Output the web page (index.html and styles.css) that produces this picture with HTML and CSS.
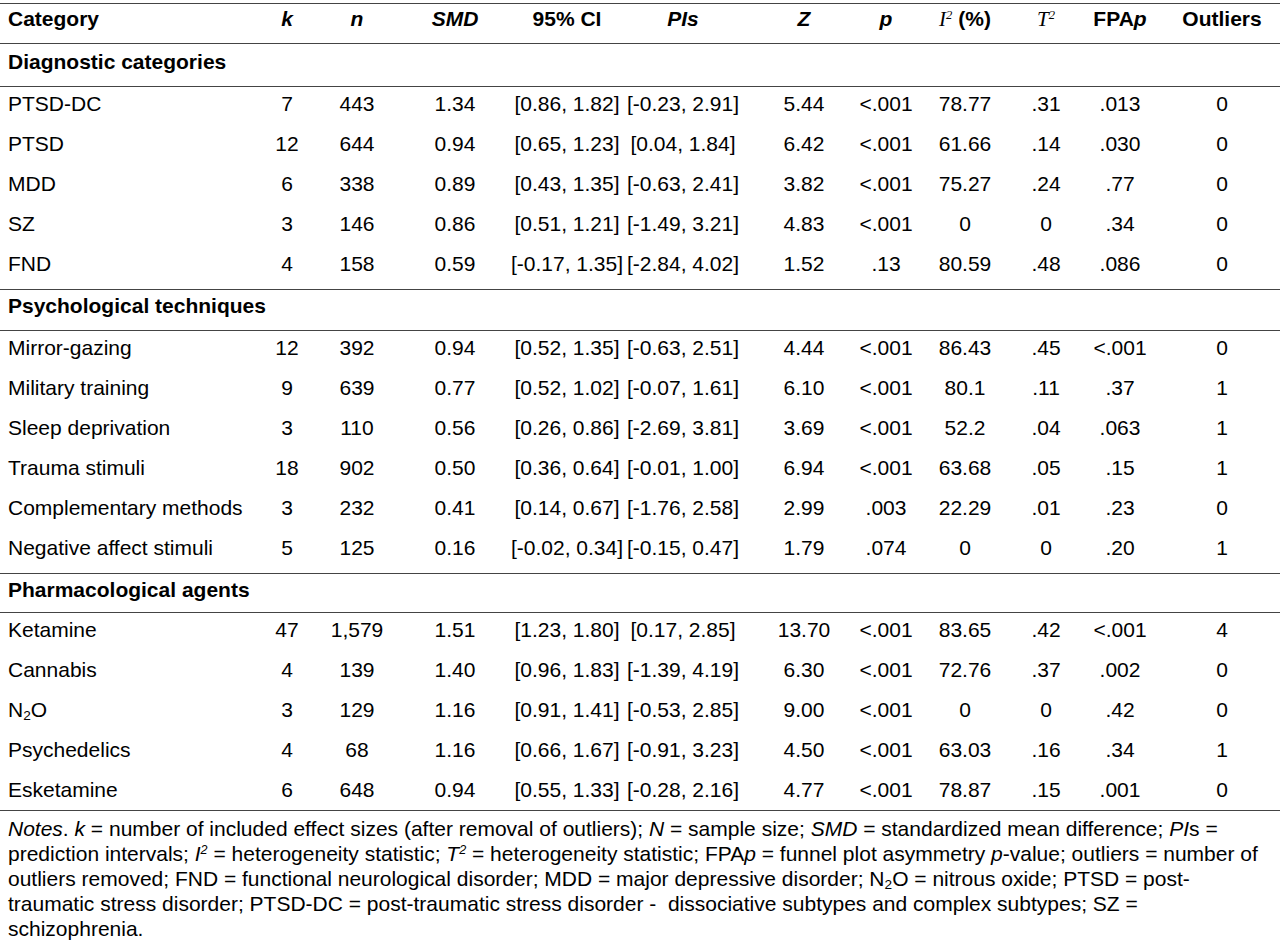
FILE: index.html
```html
<!DOCTYPE html>
<html lang="en">
    <head>
        <meta charset="UTF-8" />
        <meta name="viewport" content="width=device-width, initial-scale=1.0" />
        <title>Effect sizes by category</title>
        <link rel="stylesheet" href="styles.css">
    </head>
    <body>
        <div class="table">
            <div class="row head">
                <div class="cell cat">Category</div>
                <div class="cell"><i>k</i></div>
                <div class="cell"><i>n</i></div>
                <div class="cell"><i>SMD</i></div>
                <div class="cell">95% CI</div>
                <div class="cell"><i>PIs</i></div>
                <div class="cell"><i>Z</i></div>
                <div class="cell"><i>p</i></div>
                <div class="cell"><span><span class="serif">I<sup>2</sup></span>&nbsp;(%)</span></div>
                <div class="cell"><span class="serif">T<sup>2</sup></span></div>
                <div class="cell"><span>FPA<i>p</i></span></div>
                <div class="cell">Outliers</div>
            </div>

            <div class="row section first"><div class="cell cat">Diagnostic categories</div></div>
            <div class="row">
                <div class="cell cat">PTSD-DC</div>
                <div class="cell">7</div><div class="cell">443</div><div class="cell">1.34</div>
                <div class="cell">[0.86, 1.82]</div><div class="cell">[-0.23, 2.91]</div>
                <div class="cell">5.44</div><div class="cell">&lt;.001</div><div class="cell">78.77</div>
                <div class="cell">.31</div><div class="cell">.013</div><div class="cell">0</div>
            </div>
            <div class="row">
                <div class="cell cat">PTSD</div>
                <div class="cell">12</div><div class="cell">644</div><div class="cell">0.94</div>
                <div class="cell">[0.65, 1.23]</div><div class="cell">[0.04, 1.84]</div>
                <div class="cell">6.42</div><div class="cell">&lt;.001</div><div class="cell">61.66</div>
                <div class="cell">.14</div><div class="cell">.030</div><div class="cell">0</div>
            </div>
            <div class="row">
                <div class="cell cat">MDD</div>
                <div class="cell">6</div><div class="cell">338</div><div class="cell">0.89</div>
                <div class="cell">[0.43, 1.35]</div><div class="cell">[-0.63, 2.41]</div>
                <div class="cell">3.82</div><div class="cell">&lt;.001</div><div class="cell">75.27</div>
                <div class="cell">.24</div><div class="cell">.77</div><div class="cell">0</div>
            </div>
            <div class="row">
                <div class="cell cat">SZ</div>
                <div class="cell">3</div><div class="cell">146</div><div class="cell">0.86</div>
                <div class="cell">[0.51, 1.21]</div><div class="cell">[-1.49, 3.21]</div>
                <div class="cell">4.83</div><div class="cell">&lt;.001</div><div class="cell">0</div>
                <div class="cell">0</div><div class="cell">.34</div><div class="cell">0</div>
            </div>
            <div class="row last">
                <div class="cell cat">FND</div>
                <div class="cell">4</div><div class="cell">158</div><div class="cell">0.59</div>
                <div class="cell">[-0.17, 1.35]</div><div class="cell">[-2.84, 4.02]</div>
                <div class="cell">1.52</div><div class="cell">.13</div><div class="cell">80.59</div>
                <div class="cell">.48</div><div class="cell">.086</div><div class="cell">0</div>
            </div>

            <div class="row section"><div class="cell cat">Psychological techniques</div></div>
            <div class="row">
                <div class="cell cat">Mirror-gazing</div>
                <div class="cell">12</div><div class="cell">392</div><div class="cell">0.94</div>
                <div class="cell">[0.52, 1.35]</div><div class="cell">[-0.63, 2.51]</div>
                <div class="cell">4.44</div><div class="cell">&lt;.001</div><div class="cell">86.43</div>
                <div class="cell">.45</div><div class="cell">&lt;.001</div><div class="cell">0</div>
            </div>
            <div class="row">
                <div class="cell cat">Military training</div>
                <div class="cell">9</div><div class="cell">639</div><div class="cell">0.77</div>
                <div class="cell">[0.52, 1.02]</div><div class="cell">[-0.07, 1.61]</div>
                <div class="cell">6.10</div><div class="cell">&lt;.001</div><div class="cell">80.1</div>
                <div class="cell">.11</div><div class="cell">.37</div><div class="cell">1</div>
            </div>
            <div class="row">
                <div class="cell cat">Sleep deprivation</div>
                <div class="cell">3</div><div class="cell">110</div><div class="cell">0.56</div>
                <div class="cell">[0.26, 0.86]</div><div class="cell">[-2.69, 3.81]</div>
                <div class="cell">3.69</div><div class="cell">&lt;.001</div><div class="cell">52.2</div>
                <div class="cell">.04</div><div class="cell">.063</div><div class="cell">1</div>
            </div>
            <div class="row">
                <div class="cell cat">Trauma stimuli</div>
                <div class="cell">18</div><div class="cell">902</div><div class="cell">0.50</div>
                <div class="cell">[0.36, 0.64]</div><div class="cell">[-0.01, 1.00]</div>
                <div class="cell">6.94</div><div class="cell">&lt;.001</div><div class="cell">63.68</div>
                <div class="cell">.05</div><div class="cell">.15</div><div class="cell">1</div>
            </div>
            <div class="row">
                <div class="cell cat">Complementary methods</div>
                <div class="cell">3</div><div class="cell">232</div><div class="cell">0.41</div>
                <div class="cell">[0.14, 0.67]</div><div class="cell">[-1.76, 2.58]</div>
                <div class="cell">2.99</div><div class="cell">.003</div><div class="cell">22.29</div>
                <div class="cell">.01</div><div class="cell">.23</div><div class="cell">0</div>
            </div>
            <div class="row last">
                <div class="cell cat">Negative affect stimuli</div>
                <div class="cell">5</div><div class="cell">125</div><div class="cell">0.16</div>
                <div class="cell">[-0.02, 0.34]</div><div class="cell">[-0.15, 0.47]</div>
                <div class="cell">1.79</div><div class="cell">.074</div><div class="cell">0</div>
                <div class="cell">0</div><div class="cell">.20</div><div class="cell">1</div>
            </div>

            <div class="row section short"><div class="cell cat">Pharmacological agents</div></div>
            <div class="row">
                <div class="cell cat">Ketamine</div>
                <div class="cell">47</div><div class="cell">1,579</div><div class="cell">1.51</div>
                <div class="cell">[1.23, 1.80]</div><div class="cell">[0.17, 2.85]</div>
                <div class="cell">13.70</div><div class="cell">&lt;.001</div><div class="cell">83.65</div>
                <div class="cell">.42</div><div class="cell">&lt;.001</div><div class="cell">4</div>
            </div>
            <div class="row">
                <div class="cell cat">Cannabis</div>
                <div class="cell">4</div><div class="cell">139</div><div class="cell">1.40</div>
                <div class="cell">[0.96, 1.83]</div><div class="cell">[-1.39, 4.19]</div>
                <div class="cell">6.30</div><div class="cell">&lt;.001</div><div class="cell">72.76</div>
                <div class="cell">.37</div><div class="cell">.002</div><div class="cell">0</div>
            </div>
            <div class="row">
                <div class="cell cat">N<sub>2</sub>O</div>
                <div class="cell">3</div><div class="cell">129</div><div class="cell">1.16</div>
                <div class="cell">[0.91, 1.41]</div><div class="cell">[-0.53, 2.85]</div>
                <div class="cell">9.00</div><div class="cell">&lt;.001</div><div class="cell">0</div>
                <div class="cell">0</div><div class="cell">.42</div><div class="cell">0</div>
            </div>
            <div class="row">
                <div class="cell cat">Psychedelics</div>
                <div class="cell">4</div><div class="cell">68</div><div class="cell">1.16</div>
                <div class="cell">[0.66, 1.67]</div><div class="cell">[-0.91, 3.23]</div>
                <div class="cell">4.50</div><div class="cell">&lt;.001</div><div class="cell">63.03</div>
                <div class="cell">.16</div><div class="cell">.34</div><div class="cell">1</div>
            </div>
            <div class="row last end">
                <div class="cell cat">Esketamine</div>
                <div class="cell">6</div><div class="cell">648</div><div class="cell">0.94</div>
                <div class="cell">[0.55, 1.33]</div><div class="cell">[-0.28, 2.16]</div>
                <div class="cell">4.77</div><div class="cell">&lt;.001</div><div class="cell">78.87</div>
                <div class="cell">.15</div><div class="cell">.001</div><div class="cell">0</div>
            </div>
        </div>

        <p class="notes">
            <i>Notes</i>. <i>k</i> = number of included effect sizes (after removal of outliers); <i>N</i> = sample size; <i>SMD</i> = standardized mean difference; <i>PI</i>s = prediction intervals; <i>I<sup>2</sup></i> = heterogeneity statistic; <i>T<sup>2</sup></i> = heterogeneity statistic; FPA<i>p</i> = funnel plot asymmetry <i>p</i>-value; outliers = number of outliers removed; FND = functional neurological disorder; MDD = major depressive disorder; N<sub>2</sub>O = nitrous oxide; PTSD = post-traumatic stress disorder; PTSD-DC = post-traumatic stress disorder -&nbsp; dissociative subtypes and complex subtypes; SZ = schizophrenia.
        </p>
    </body>
</html>
```

FILE: styles.css
```css
body {
    margin: 0;
    background-color: #fff;
    color: #000;
    font-family: "Liberation Sans", Arial, sans-serif;
    font-size: 21px;
}
.table {
    margin-top: 3px;
    border-top: 1px solid #444;
}
.row {
    display: grid;
    grid-template-columns: 252px 70px 70px 126px 98px 134px 108px 56px 102px 60px 88px 116px;
    box-sizing: border-box;
    height: 40px;
    padding-top: 5px;
    line-height: 24px;
}
.row.head {
    height: 40px;
    padding-top: 3px;
    font-weight: bold;
    border-bottom: 1px solid #444;
}
.row.section {
    height: 41px;
    padding-top: 4px;
    font-weight: bold;
    border-bottom: 1px solid #444;
}
.row.section.first {
    height: 43px;
    padding-top: 6px;
}
.row.section.short {
    height: 39px;
}
.row.last {
    height: 43px;
    border-bottom: 1px solid #444;
}
.row.last.end {
    height: 38px;
}
.cell {
    display: flex;
    justify-content: center;
    white-space: nowrap;
}
.cell.cat {
    display: block;
    padding-left: 8px;
}
.serif {
    font-family: "Liberation Serif", "Times New Roman", serif;
    font-style: italic;
    font-weight: normal;
}
sup {
    font-size: 0.6em;
    line-height: 0;
    vertical-align: 0.55em;
}
sub {
    font-size: 0.65em;
    line-height: 0;
    vertical-align: -0.2em;
}
.notes {
    margin: 0;
    padding: 5px 4px 0 8px;
    line-height: 25px;
}
```
